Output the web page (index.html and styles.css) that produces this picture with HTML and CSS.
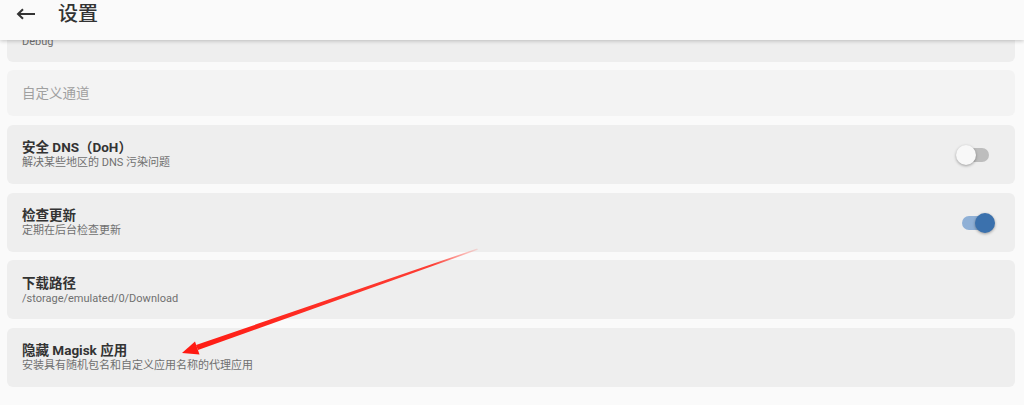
FILE: index.html
```html
<!DOCTYPE html>
<html lang="zh">
<head>
<meta charset="utf-8">
<title>设置</title>
<link rel="stylesheet" href="styles.css">
</head>
<body>
<header class="appbar">
  <svg class="back" width="20" height="12" viewBox="0 0 20 12" aria-hidden="true">
    <path d="M19 6H2.5M7 1.2L2 6l5 4.8" fill="none" stroke="#333" stroke-width="2"/>
  </svg>
  <h1 class="appbar-title">设置</h1>
</header>

<main class="list">
  <div class="card">
    <div class="card-text">
      <div class="title-spacer"></div>
      <div class="sub">Debug</div>
    </div>
  </div>
  <div class="card card-disabled">
    <div class="card-text">
      <div class="title-disabled">自定义通道</div>
    </div>
  </div>
  <div class="card">
    <div class="card-text">
      <div class="title">安全 DNS（DoH）</div>
      <div class="sub">解决某些地区的 DNS 污染问题</div>
    </div>
    <div class="switch"><span class="track"></span><span class="thumb"></span></div>
  </div>
  <div class="card">
    <div class="card-text">
      <div class="title">检查更新</div>
      <div class="sub">定期在后台检查更新</div>
    </div>
    <div class="switch on"><span class="track"></span><span class="thumb"></span></div>
  </div>
  <div class="card">
    <div class="card-text">
      <div class="title">下载路径</div>
      <div class="sub">/storage/emulated/0/Download</div>
    </div>
  </div>
  <div class="card">
    <div class="card-text">
      <div class="title">隐藏 Magisk 应用</div>
      <div class="sub">安装具有随机包名和自定义应用名称的代理应用</div>
    </div>
  </div>
</main>

<svg class="annot" width="1024" height="405" viewBox="0 0 1024 405" aria-hidden="true">
  <defs>
    <linearGradient id="fade" x1="477" y1="249" x2="182" y2="353" gradientUnits="userSpaceOnUse">
      <stop offset="0" stop-color="#ff3b30" stop-opacity="0.15"/>
      <stop offset="0.15" stop-color="#ff2a1f" stop-opacity="0.9"/>
      <stop offset="1" stop-color="#ff1a12"/>
    </linearGradient>
  </defs>
  <polygon points="477.2,248.6 477.8,249.8 198,350 196,345" fill="url(#fade)"/>
  <polygon points="182,353 195,341.5 199.5,354.5" fill="#ff1a12"/>
</svg>
</body>
</html>
```

FILE: styles.css
```css
html, body {
  margin: 0;
  padding: 0;
}

body {
  background: #fafafa;
  width: 1024px;
  height: 405px;
  overflow: hidden;
  position: relative;
  font-family: Roboto, "Noto Sans CJK SC", sans-serif;
}

.appbar {
  position: absolute;
  top: 0;
  left: 0;
  right: 0;
  height: 40px;
  background: #fafafa;
  box-shadow: 0 1px 4px rgba(0, 0, 0, 0.22);
  display: flex;
  align-items: center;
  padding-left: 16px;
  box-sizing: border-box;
  z-index: 2;
}

.back {
  display: block;
  margin-top: -12px;
}

.appbar-title {
  margin: -12px 0 0 22px;
  font-size: 20px;
  font-weight: 500;
  color: #333;
  line-height: 24px;
}

.list {
  display: flex;
  flex-direction: column;
  gap: 8.67px;
  padding: 2.66px 9px 0 7px;
}

.card {
  height: 59px;
  background: #eeeeee;
  border-radius: 6px;
  display: flex;
  align-items: center;
  padding: 0 15px;
  box-sizing: border-box;
}

.card-disabled {
  height: 46px;
  background: #f3f3f3;
}

.card-text {
  flex: 1;
  display: flex;
  flex-direction: column;
}

.title-spacer {
  height: 18px;
}

.title {
  font-size: 13.5px;
  line-height: 16px;
  font-weight: 700;
  color: #333333;
}

.title-disabled {
  font-size: 13.5px;
  line-height: 16px;
  color: #a0a0a0;
}

.sub {
  font-size: 11px;
  line-height: 13px;
  color: #707070;
  margin-top: 1px;
}

.switch {
  position: relative;
  width: 40px;
  height: 20px;
  margin-right: 4px;
  margin-top: 2px;
}

.track {
  position: absolute;
  left: 3px;
  top: 3px;
  width: 30px;
  height: 14px;
  border-radius: 7px;
  background: #bdbdbd;
}

.thumb {
  position: absolute;
  left: 0;
  top: 0;
  width: 20px;
  height: 20px;
  border-radius: 50%;
  background: #f8f8f8;
  box-shadow: 0 1px 3px rgba(0, 0, 0, 0.35);
}

.switch.on .track {
  left: 6px;
  background: #8fb0d6;
}

.switch.on .thumb {
  left: 19px;
  background: #3b71ad;
}

.annot {
  position: absolute;
  left: 0;
  top: 0;
  z-index: 3;
  pointer-events: none;
}
```
